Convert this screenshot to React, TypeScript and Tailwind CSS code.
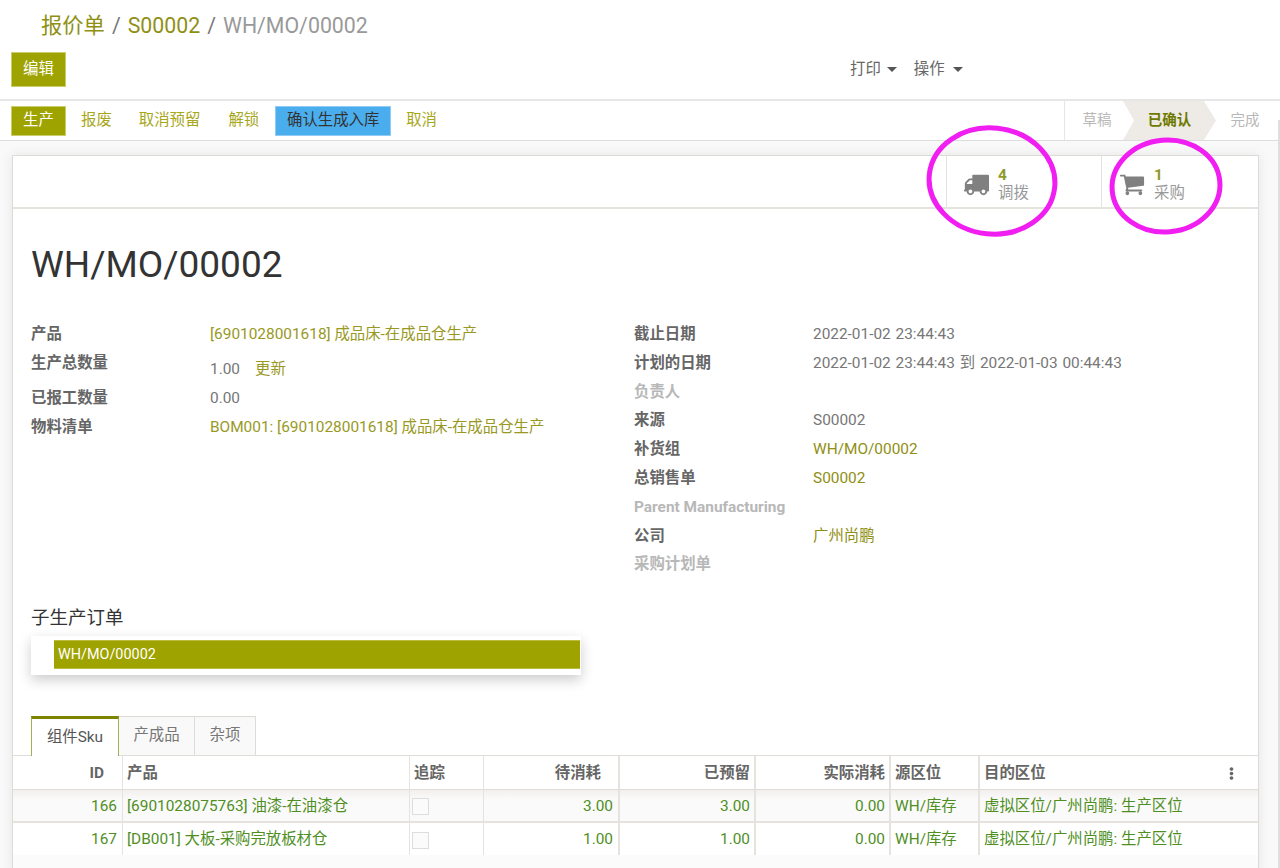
import { FaEllipsisV } from 'react-icons/fa'

const font = { fontFamily: '"Roboto", "Noto Sans CJK SC", sans-serif' }

const leftFields = [
  { label: '产品', value: '[6901028001618] 成品床-在成品仓生产', link: true, h: 'h-[29px]' },
  { label: '生产总数量', value: '1.00', update: true, h: 'h-[35px]' },
  { label: '已报工数量', value: '0.00', h: 'h-[29px]' },
  { label: '物料清单', value: 'BOM001: [6901028001618] 成品床-在成品仓生产', link: true, h: 'h-[29px]' },
]

const rightFields = [
  { label: '截止日期', value: '2022-01-02 23:44:43' },
  { label: '计划的日期', value: '2022-01-02 23:44:43 到 2022-01-03 00:44:43' },
  { label: '负责人', value: '', muted: true },
  { label: '来源', value: 'S00002' },
  { label: '补货组', value: 'WH/MO/00002', link: true },
  { label: '总销售单', value: 'S00002', link: true },
  { label: 'Parent Manufacturing', value: '', muted: true },
  { label: '公司', value: '广州尚鹏', link: true },
  { label: '采购计划单', value: '', muted: true },
]

const rows = [
  { id: 166, name: '[6901028075763] 油漆-在油漆仓', todo: '3.00', reserved: '3.00', bg: 'h-[33px] border-b-2 bg-linear-to-b from-[#f1f0ee] to-[#fbfafa] to-30%' },
  { id: 167, name: '[DB001] 大板-采购完放板材仓', todo: '1.00', reserved: '1.00', bg: 'h-[32px] bg-white' },
]

const cols = 'grid grid-cols-[109px_287px_74px_135px_136px_135px_89px_1fr] [&>div]:pt-[2px]'

function TruckIcon() {
  return (
    <svg className="-ml-[1px] h-[26px] w-[26px] shrink-0 text-[#808080]" viewBox="0 0 1792 1792" fill="currentColor">
      <path d="M640 1408q0-52-38-90t-90-38-90 38-38 90 38 90 90 38 90-38 38-90zm-384-512h384v-256h-158q-13 0-22 9l-195 195q-9 9-9 22v30zm1280 512q0-52-38-90t-90-38-90 38-38 90 38 90 90 38 90-38 38-90zm256-1088v1024q0 15-4 26.5t-13.5 18.5-16.5 11.5-23.5 6-22.5 2-25.5 0-22.5-.5q0 106-75 181t-181 75-181-75-75-181h-384q0 106-75 181t-181 75-181-75-75-181h-64q-3 0-22.5.5t-25.5 0-22.5-2-23.5-6-16.5-11.5-13.5-18.5-4-26.5q0-26 19-45t45-19v-320q0-8-.5-35t0-38 2.5-34.5 6.5-37 14-30.5 22.5-30l198-198q19-19 50.5-32t58.5-13h160v-192q0-26 19-45t45-19h1024q26 0 45 19t19 45z" />
    </svg>
  )
}

function CartIcon() {
  return (
    <svg className="h-[26px] w-[26px] shrink-0 text-[#808080]" viewBox="0 0 1792 1792" fill="currentColor">
      <path d="M704 1536q0 52-38 90t-90 38-90-38-38-90 38-90 90-38 90 38 38 90zm896 0q0 52-38 90t-90 38-90-38-38-90 38-90 90-38 90 38 38 90zm128-1088v512q0 24-16.5 42.5t-40.5 21.5l-1044 122q13 60 13 70 0 16-24 64h920q26 0 45 19t19 45-19 45-45 19h-1024q-26 0-45-19t-19-45q0-11 8-31.5t16-36 21.5-40 15.5-29.5l-177-823h-204q-26 0-45-19t-19-45 19-45 45-19h256q16 0 28.5 6.5t19.5 15.5 13 24.5 8 26 5.5 29.5 4.5 26h1201q26 0 45 19t19 45z" />
    </svg>
  )
}

export default function App() {
  return (
    <div style={font} className="relative h-[868px] w-[1280px] overflow-hidden bg-[#f9f9f9] text-[15.4px] text-[#666666]">
      {/* control panel */}
      <div className="h-[101px] border-b-2 border-[#e6e6e6] bg-white pl-[11px]">
        <div className="flex h-[52px] items-center pl-[30px] text-[21.3px]">
          <span className="text-[#8f8f14]">报价单</span>
          <span className="mx-[7px] text-[#777777]">/</span>
          <span className="text-[#8f8f14]">S00002</span>
          <span className="mx-[7px] text-[#777777]">/</span>
          <span className="text-[#999999]">WH/MO/00002</span>
        </div>
        <div className="flex items-center">
          <button className="h-[35px] w-[55px] border border-[#c9cd6c] bg-[#9fa300] text-white">编辑</button>
          <div className="ml-[784px] flex h-[35px] items-center text-[#666666]">
            <span>打印</span>
            <span className="ml-[6px] mr-[17px] h-0 w-0 border-x-[5px] border-t-[5px] border-x-transparent border-t-[#555555]" />
            <span>操作</span>
            <span className="ml-[8px] h-0 w-0 border-x-[5px] border-t-[5px] border-x-transparent border-t-[#555555]" />
          </div>
        </div>
      </div>

      {/* status bar */}
      <div className="flex h-[40px] items-center justify-between border-b border-[#dddddd] bg-white pl-[11px] pr-[2px]">
        <div className="flex items-center text-[#a7a71c]">
          <button className="h-[30px] w-[55px] border border-[#c9cd6c] bg-[#9fa300] text-white">生产</button>
          <span className="ml-[15px]">报废</span>
          <span className="ml-[27px]">取消预留</span>
          <span className="ml-[28px]">解锁</span>
          <button className="ml-[16px] h-[30px] w-[116px] border border-[#8fcbf5] bg-[#4aaeee] text-[#333333]">确认生成入库</button>
          <span className="ml-[15px]">取消</span>
        </div>
        <div className="flex h-full w-[214px] items-center border-l border-[#e6e6e6] text-[14.5px]">
          <span className="w-[58px] pl-[6px] text-center text-[#b8b8b8]">草稿</span>
          <span className="flex h-full w-[93px] items-center justify-center bg-[#eeeae6] font-bold text-[#6f7a00] [clip-path:polygon(0_0,87%_0,100%_50%,87%_100%,0_100%,12%_50%)]">已确认</span>
          <span className="w-[62px] pr-[4px] text-center text-[#b8b8b8]">完成</span>
        </div>
      </div>

      {/* sheet */}
      <div className="mx-[12px] mt-[14px] w-[1247px] border border-[#dedbd7] bg-white shadow-[0_0_12px_rgba(0,0,0,0.08)]">
        <div className="flex h-[53px] justify-end border-b-2 border-[#e6e3df] bg-white">
          <div className="flex w-[155px] items-center border-l border-[#e6e3df] pl-[17px] pt-[4px]">
            <TruckIcon />
            <div className="ml-[9px] leading-[18px]">
              <div className="font-bold text-[#8e9a2c]">4</div>
              <div className="text-[#999999]">调拨</div>
            </div>
          </div>
          <div className="flex w-[157px] items-center border-l border-[#e6e3df] pl-[17px] pt-[4px]">
            <CartIcon />
            <div className="ml-[9px] leading-[18px]">
              <div className="font-bold text-[#8e9a2c]">1</div>
              <div className="text-[#999999]">采购</div>
            </div>
          </div>
        </div>

        <h1 className="ml-[18px] mt-[33px] text-[37px] leading-[46px] text-[#333333]">WH/MO/00002</h1>

        <div className="mt-[30px] flex h-[288px] pl-[18px]">
          <div className="w-[603px]">
            {leftFields.map(f => (
              <div key={f.label} className={`flex ${f.h}`}>
                <div className="w-[179px] pt-[5px] font-bold text-[#666666]">{f.label}</div>
                <div className={`flex ${f.link ? 'text-[#99991f]' : 'text-[#777777]'} ${f.update ? 'pt-[11px]' : 'pt-[5px]'}`}>
                  {f.value}
                  {f.update && <span className="ml-[15px] text-[#99991f]">更新</span>}
                </div>
              </div>
            ))}
          </div>
          <div>
            {rightFields.map(f => (
              <div key={f.label} className="flex h-[28.8px]">
                <div className={`w-[179px] whitespace-nowrap pt-[5px] font-bold ${f.muted ? 'text-[#b8b8b8]' : 'text-[#666666]'}`}>{f.label}</div>
                <div className={`pt-[5px] [word-spacing:1px] ${f.link ? 'text-[#8f8f14]' : 'text-[#777777]'}`}>{f.value}</div>
              </div>
            ))}
          </div>
        </div>

        <div className="ml-[18px] text-[18.5px] leading-[24px] text-[#333333]">子生产订单</div>
        <div className="ml-[18px] mt-[6px] h-[39px] w-[550px] bg-white pl-[23px] pr-[1px] pt-[4px] shadow-[0_5px_12px_rgba(0,0,0,0.2)]">
          <div className="flex h-[29px] items-center border-y border-[#b9bc3c] bg-[#9fa300] pl-[4px] text-[14.4px] text-white">WH/MO/00002</div>
        </div>

        {/* tabs */}
        <div className="ml-[18px] mt-[41px] flex h-[39px]">
          <div className="z-10 flex h-[40px] w-[88px] items-center justify-center border-x border-t-[3px] border-[#a7ad55] border-t-[#7d8500] bg-white text-[#555555]">组件Sku</div>
          <div className="flex h-[39px] w-[76px] items-center justify-center border-t border-r border-[#dedbd7] bg-[#f9f9f9] text-[#777777]">产成品</div>
          <div className="flex h-[39px] w-[61px] items-center justify-center border-t border-r border-[#dedbd7] bg-[#f9f9f9] text-[#777777]">杂项</div>
        </div>

        {/* table */}
        <div className={`${cols} h-[35px] border-y border-[#e0ddd9] bg-white font-bold text-[#666666]`}>
          <div className="flex items-center justify-end pr-[18px]">ID</div>
          <div className="flex items-center border-l border-[#e6e3df] pl-[4px]">产品</div>
          <div className="flex items-center border-l border-[#e6e3df] pl-[4px]">追踪</div>
          <div className="flex items-center justify-end border-l border-[#e6e3df] pr-[17px]">待消耗</div>
          <div className="flex items-center justify-end border-l-2 border-[#e6e3df] pr-[4px]">已预留</div>
          <div className="flex items-center justify-end border-l-2 border-[#e6e3df] pr-[4px]">实际消耗</div>
          <div className="flex items-center border-l-2 border-[#e6e3df] pl-[4px]">源区位</div>
          <div className="flex items-center justify-between border-l-2 border-[#e6e3df] pl-[4px] pr-[20px]">
            目的区位
            <FaEllipsisV className="h-[13px] w-[13px] text-[#666666]" />
          </div>
        </div>
        {rows.map(r => (
          <div key={r.id} className={`${cols} border-[#e6e3df] ${r.bg} text-[#4f8f1f]`}>
            <div className="flex items-center justify-end pr-[5px]">{r.id}</div>
            <div className="flex items-center border-l border-[#e6e3df] pl-[4px]">{r.name}</div>
            <div className="flex items-center border-l border-[#e6e3df] pl-[2px]">
              <span className="h-[17px] w-[17px] border border-[#dddddd] bg-[#fbfbfb]" />
            </div>
            <div className="flex items-center justify-end border-l border-[#e6e3df] pr-[5px]">{r.todo}</div>
            <div className="flex items-center justify-end border-l-2 border-[#e6e3df] pr-[4px]">{r.reserved}</div>
            <div className="flex items-center justify-end border-l-2 border-[#e6e3df] pr-[4px]">0.00</div>
            <div className="flex items-center border-l-2 border-[#e6e3df] pl-[4px]">WH/库存</div>
            <div className="flex items-center border-l-2 border-[#e6e3df] pl-[4px]">虚拟区位/广州尚鹏: 生产区位</div>
          </div>
        ))}
        <div className="h-[20px] bg-[#fbfbfb]" />
      </div>

      {/* scrollbar sliver at the window edge */}
      <div className="absolute bottom-0 right-0 top-[120px] w-[2px] bg-[#dedede]" />

      {/* hand-drawn annotation circles */}
      <svg className="absolute left-[920px] top-[120px] h-[122px] w-[310px]" viewBox="0 0 310 122" fill="none" stroke="#f01ef0" strokeWidth="5">
        <ellipse cx="72" cy="61" rx="63" ry="53" transform="rotate(6 72 61)" />
        <ellipse cx="246" cy="66" rx="54" ry="46" transform="rotate(-5 246 66)" />
      </svg>
    </div>
  )
}
